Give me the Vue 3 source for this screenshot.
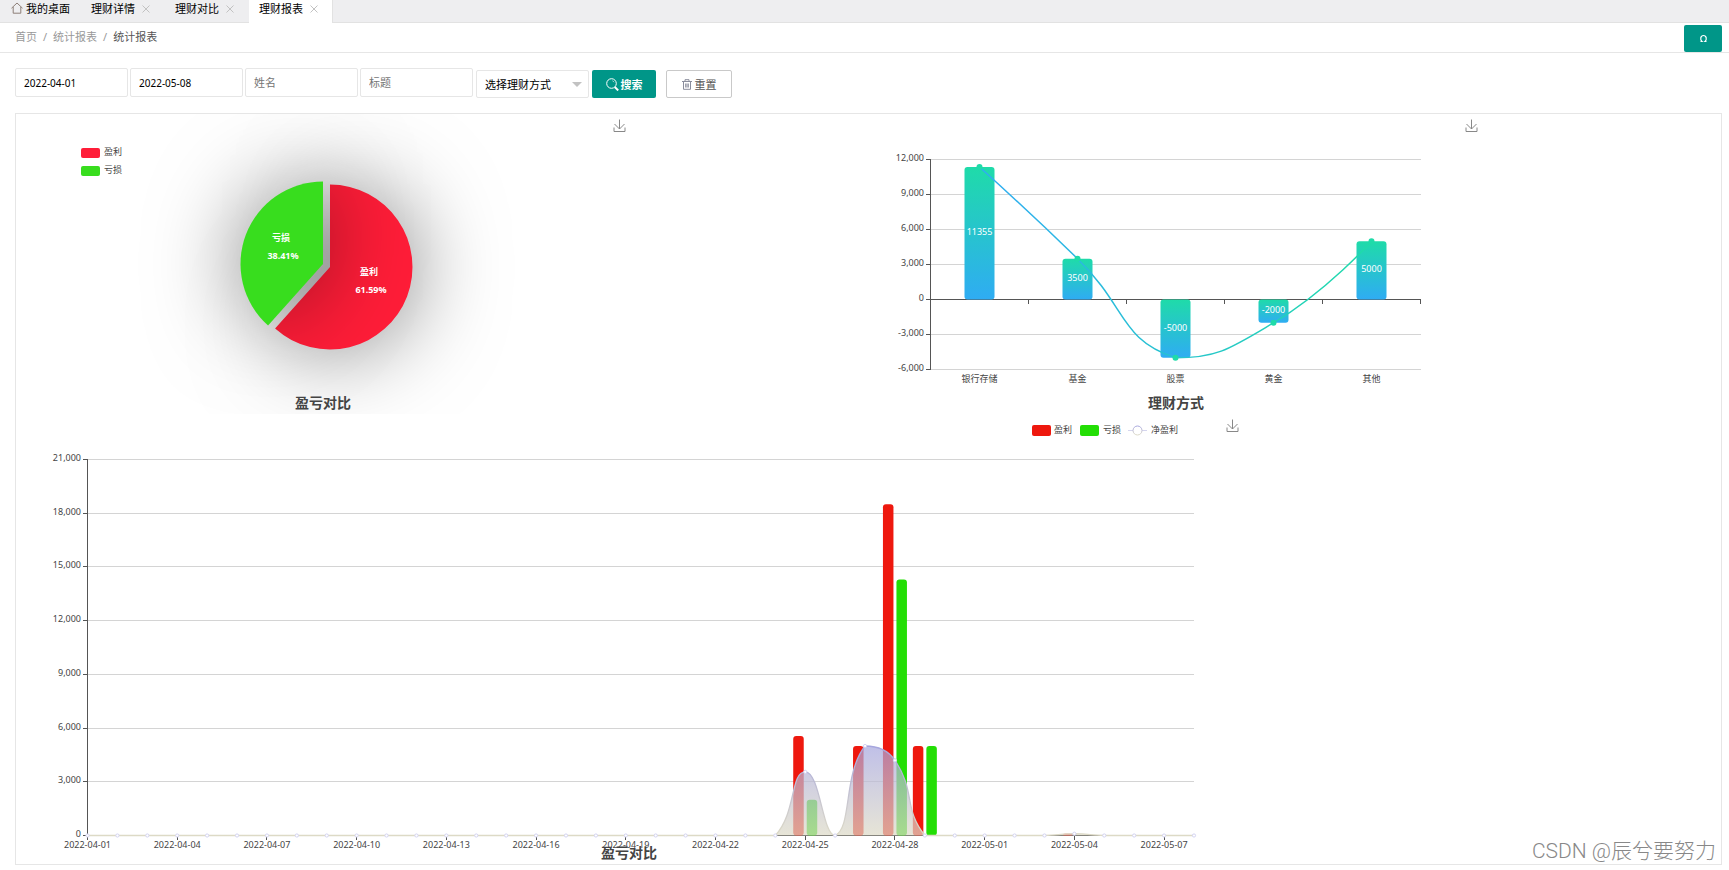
<script setup>
import { ref, computed } from 'vue'

const tabs = ref(['理财详情', '理财对比', '理财报表'])
const activeTab = ref('理财报表')

const form = ref({
  start: '2022-04-01',
  end: '2022-05-08',
  name: '',
  title: '',
  type: ''
})

const types = ['银行存储', '基金', '股票', '黄金', '其他']

const reset = () => {
  form.value = { start: '', end: '', name: '', title: '', type: '' }
}

const closeTab = tab => {
  tabs.value = tabs.value.filter(t => t !== tab)
}

const format = n => n.toLocaleString('en-US')

// pie
const slice = (cx, cy, r, from, to) => {
  const point = p => {
    const a = p * Math.PI * 2
    return `${cx + r * Math.sin(a)} ${cy - r * Math.cos(a)}`
  }
  const large = to - from > 0.5 ? 1 : 0
  return `M${cx} ${cy}L${point(from)}A${r} ${r} 0 ${large} 1 ${point(to)}Z`
}

const pie = [
  { name: '盈利', value: '61.59%', color: '#ff1d38', path: slice(314, 153, 82.5, 0, 0.6159), x: 354, y: 161 },
  { name: '亏损', value: '38.41%', color: '#38dd1e', path: slice(307, 150, 82.5, 0.6159, 1), x: 266, y: 127 }
]

// smooth line, control points never go past the neighbours
const clamp = (v, a, b) => Math.max(Math.min(v, Math.max(a, b)), Math.min(a, b))

const smooth = pts => {
  let d = `M${pts[0].x} ${pts[0].y}`
  let c0 = pts[0]
  for (let i = 1; i < pts.length; i++) {
    const prev = pts[i - 1]
    const p = pts[i]
    const next = pts[i + 1]
    let c1 = p
    let nextC0 = p
    if (next) {
      const d0 = Math.hypot(p.x - prev.x, p.y - prev.y)
      const d1 = Math.hypot(next.x - p.x, next.y - p.y)
      const vx = (next.x - prev.x) * 0.5
      const vy = (next.y - prev.y) * 0.5
      const k = d1 / (d0 + d1)
      nextC0 = {
        x: clamp(p.x + vx * k, p.x, next.x),
        y: clamp(p.y + vy * k, p.y, next.y)
      }
      c1 = {
        x: clamp(p.x - vx * (1 - k), prev.x, p.x),
        y: clamp(p.y - vy * (1 - k), prev.y, p.y)
      }
    }
    d += `C${c0.x} ${c0.y} ${c1.x} ${c1.y} ${p.x} ${p.y}`
    c0 = nextC0
  }
  return d
}

// 理财方式
const typeTicks = [12000, 9000, 6000, 3000, 0, -3000, -6000]
const typeValues = [11355, 3500, -5000, -2000, 5000]
const typeY = v => 185.5 - v * 35 / 3000
const typeBars = typeValues.map((value, i) => ({
  name: types[i],
  value,
  x: 110.5 + i * 98,
  y: typeY(value),
  top: Math.min(typeY(value), 185.5),
  height: Math.abs(value) * 35 / 3000
}))
const typeLine = smooth(typeBars)

// 盈亏对比
const dayTicks = [21000, 18000, 15000, 12000, 9000, 6000, 3000, 0]
const dayY = v => 421.5 - v * 376 / 21000
const records = {
  '2022-04-25': [5555, 2000],
  '2022-04-27': [5000, 0],
  '2022-04-28': [18500, 14300],
  '2022-04-29': [5000, 5000],
  '2022-05-04': [100, 0]
}
const days = computed(() => {
  const list = []
  for (let i = 0; i < 38; i++) {
    const date = new Date(Date.UTC(2022, 3, 1 + i)).toISOString().slice(0, 10)
    const [gain, loss] = records[date] || [0, 0]
    list.push({ date, gain, loss, x: 71.5 + i * 1106.5 / 37, y: dayY(gain - loss) })
  }
  return list
})
const dayLine = computed(() => smooth(days.value))
</script>

<template>
  <div class="page">
    <nav class="tabs">
      <a class="home" href="#">
        <svg width="12" height="12" viewBox="0 0 12 12" fill="none" stroke="#8d7f78">
          <path d="M.5 6.2 6 1l5.5 5.2M2.2 5v6.2h7.6V5" />
        </svg>
        我的桌面
      </a>
      <div v-for="tab in tabs" :key="tab" class="tab" :class="{ active: tab === activeTab }">
        <a href="#" @click.prevent="activeTab = tab">{{ tab }}</a>
        <button class="close" :aria-label="`关闭${tab}`" @click="closeTab(tab)">
          <svg width="8" height="8" viewBox="0 0 8 8" stroke="#c2c2c2"><path d="M.5.5l7 7M7.5.5l-7 7" /></svg>
        </button>
      </div>
    </nav>

    <header class="crumbs">
      <div class="path">
        <a href="#">首页</a><i>/</i><a href="#">统计报表</a><i>/</i><span>统计报表</span>
      </div>
      <button class="refresh" aria-label="刷新">
        <svg width="9" height="9" viewBox="0 0 9 9" fill="none" stroke="#fff" stroke-width="1.2">
          <path d="M1.5 7.5H3C.8 5.500 1.500 1.500 4.500 1.500S8.200 5.500 6 7.500h1.500" />
        </svg>
      </button>
    </header>

    <form class="search" @submit.prevent>
      <div class="fields">
        <input v-model="form.start" class="date" type="text" aria-label="开始日期">
        <input v-model="form.end" class="date" type="text" aria-label="结束日期">
        <input v-model="form.name" type="text" placeholder="姓名" aria-label="姓名">
        <input v-model="form.title" type="text" placeholder="标题" aria-label="标题">
      </div>
      <div class="select">
        <select v-model="form.type" aria-label="选择理财方式">
          <option value="">选择理财方式</option>
          <option v-for="t in types" :key="t" :value="t">{{ t }}</option>
        </select>
      </div>
      <button class="btn primary" type="submit">
        <svg width="13" height="13" viewBox="0 0 13 13" fill="none" stroke="#fff">
          <circle cx="5.5" cy="5.5" r="4.8" />
          <path d="M8.8 9l3.400 3.400" stroke-width="2" />
          <path d="M8 4.200A3 3 0 0 0 6.500 2.800" stroke-width=".7" />
        </svg>
        搜索
      </button>
      <button class="btn plain" type="button" @click="reset">
        <svg width="10" height="11" viewBox="0 0 10 11" fill="none" stroke="#8a8d9c">
          <path d="M0 2.500h10M3 2V.7h4V2M1.500 3v7.300h7V3M3.700 4.500v4M5 4.500v4M6.300 4.500v4" />
        </svg>
        重置
      </button>
    </form>

    <main class="board">
      <div class="row">
        <section>
          <svg class="half" viewBox="0 0 614 300">
            <defs>
              <filter id="shade" filterUnits="userSpaceOnUse" x="0" y="-100" width="614" height="500" color-interpolation-filters="sRGB">
                <feDropShadow dx="0" dy="0" stdDeviation="45" flood-color="#000" flood-opacity=".5" />
              </filter>
            </defs>
            <path v-for="p in pie" :key="p.name" :d="p.path" :fill="p.color" filter="url(#shade)" />
            <g v-for="p in pie" :key="p.value" class="pie-label">
              <text :x="p.x - 1" :y="p.y">{{ p.name }}</text>
              <text :x="p.x + 1" :y="p.y + 18">{{ p.value }}</text>
            </g>
            <g v-for="(p, i) in pie" :key="p.color">
              <rect x="65" :y="34 + i * 18" width="19" height="10" rx="2" :fill="p.color" />
              <text x="88" :y="41 + i * 18">{{ p.name }}</text>
            </g>
            <path class="download" d="M598 13.500v4h11v-4M603.500 5.500v9.500M598.500 10l5 5 5-5" />
            <text class="title" x="307" y="294">盈亏对比</text>
          </svg>
        </section>

        <section>
          <svg class="half" viewBox="0 0 614 300">
            <defs>
              <linearGradient id="bar" x1="0" y1="0" x2="0" y2="1">
                <stop offset="0" stop-color="#1fdba9" />
                <stop offset="1" stop-color="#2facf3" />
              </linearGradient>
              <linearGradient id="curve" x1="0" y1="0" x2="1" y2="0">
                <stop offset="0" stop-color="#2facf3" />
                <stop offset="1" stop-color="#1fdba9" />
              </linearGradient>
            </defs>
            <g v-for="t in typeTicks" :key="t">
              <path class="grid" :d="`M61.5 ${typeY(t)}H551.5`" />
              <path class="axis" :d="`M57 ${typeY(t)}h4.5`" />
              <text class="end" x="55" :y="typeY(t) + 1.5">{{ format(t) }}</text>
            </g>
            <path class="axis" d="M61.5 45V256M61.5 185.5H551.5" />
            <path v-for="i in 5" :key="i" class="axis" :d="`M${61.5 + i * 98} 185.5v4.5`" />
            <g v-for="b in typeBars" :key="b.name">
              <rect :x="b.x - 15" :y="b.top" width="30" :height="b.height" rx="3" fill="url(#bar)" />
              <text class="mid" :x="b.x" y="268">{{ b.name }}</text>
            </g>
            <path :d="typeLine" fill="none" stroke="url(#curve)" stroke-width="1.5" />
            <g v-for="b in typeBars" :key="b.value">
              <circle :cx="b.x" :cy="b.y" r="3" fill="#1fdba9" />
              <text class="mid light" :x="b.x" :y="b.top + b.height / 2 + 2">{{ b.value }}</text>
            </g>
            <path class="download" d="M597 13.500v4h11v-4M602.500 5.500v9.500M597.500 10l5 5 5-5" />
            <text class="title" x="307" y="294">理财方式</text>
          </svg>
        </section>
      </div>

      <section>
        <svg class="full" viewBox="0 0 1226 450">
          <defs>
            <linearGradient id="net" x1="0" y1="0" x2="0" y2="1">
              <stop offset="0" stop-color="#a6a6de" />
              <stop offset="1" stop-color="#dddac6" />
            </linearGradient>
          </defs>
          <g>
            <rect x="1016" y="11" width="19" height="11" rx="2" fill="#ee180e" />
            <text x="1038" y="19">盈利</text>
            <rect x="1064" y="11" width="19" height="11" rx="2" fill="#23de05" />
            <text x="1087" y="19">亏损</text>
            <path d="M1112 16.500h19" stroke="#d5d5ee" />
            <circle cx="1121.5" cy="16.5" r="4.5" fill="#fff" stroke="url(#net)" />
            <text x="1135" y="19">净盈利</text>
          </g>
          <path class="download" d="M1211 13.500v4h11v-4M1216.500 5.500v9.500M1211.500 10l5 5 5-5" />

          <g v-for="t in dayTicks" :key="t">
            <path class="grid" :d="`M71.5 ${dayY(t)}H1178`" />
            <path class="axis" :d="`M67 ${dayY(t)}h4.5`" />
            <text class="end" x="65" :y="dayY(t) + 1.5">{{ format(t) }}</text>
          </g>
          <path class="axis" d="M71.5 45V421.5H1178" />
          <g v-for="(d, i) in days" :key="d.date">
            <template v-if="i % 3 === 0">
              <path class="axis" :d="`M${d.x} 421.5v4.5`" />
              <text class="mid" :x="d.x" y="434">{{ d.date }}</text>
            </template>
            <rect v-if="d.gain" :x="d.x - 12" :y="dayY(d.gain)" width="10.5" :height="421.5 - dayY(d.gain)" rx="3" fill="#ee180e" />
            <rect v-if="d.loss" :x="d.x + 1.5" :y="dayY(d.loss)" width="10.5" :height="421.5 - dayY(d.loss)" rx="3" fill="#23de05" />
          </g>
          <path :d="dayLine + 'V421.5H71.5Z'" fill="url(#net)" opacity=".71" />
          <path :d="dayLine" fill="none" stroke="url(#net)" stroke-width="1.3" />
          <circle v-for="d in days" :key="d.date" :cx="d.x" :cy="d.y" r="1.6" fill="#fff" stroke="#cfcff0" stroke-width=".9" />
          <text class="title" x="613" y="444">盈亏对比</text>
        </svg>
      </section>

      <span class="mark">CSDN @辰兮要努力</span>
    </main>
  </div>
</template>

<style>
body {
  margin: 0;
  background: #fff;
}
</style>

<style scoped>
* {
  box-sizing: border-box;
}

.page,
input,
select,
button {
  font-family: "Noto Sans", "Noto Sans CJK SC", sans-serif;
  font-size: 11px;
}

a {
  color: inherit;
  text-decoration: none;
}

button {
  margin: 0;
  padding: 0;
  border: none;
  background: none;
  cursor: pointer;
}

.tabs {
  display: flex;
  height: 23px;
  line-height: 18px;
  background: #eeeef0;
  border-bottom: 1px solid #e2e2e2;
  color: #000;
}

.home {
  display: flex;
  align-items: flex-start;
  gap: 3px;
  width: 81px;
  padding-left: 11px;
}

.home svg {
  margin-top: 2px;
}

.tab {
  display: flex;
  align-items: flex-start;
  gap: 7px;
  width: 84px;
  height: 23px;
  padding-left: 10px;
}

.tab.active {
  background: #fff;
  border-right: 1px solid #e2e2e2;
}

.close {
  height: 18px;
}

.close svg {
  display: block;
}

.crumbs {
  display: flex;
  justify-content: space-between;
  height: 30px;
  padding-right: 7px;
  padding-left: 15px;
  border-bottom: 1px solid #e6e6e6;
  color: #999;
  line-height: 27px;
}

.crumbs i {
  margin: 0 6px;
  font-style: normal;
}

.crumbs span {
  color: #555;
}

.refresh {
  align-self: flex-end;
  width: 38px;
  height: 27px;
  border-radius: 2px;
  background: #009688;
}

.search {
  display: flex;
  flex-wrap: wrap;
  align-items: flex-end;
  gap: 3px;
  padding: 15px;
}

.fields {
  display: flex;
  gap: 2px;
  padding-bottom: 1px;
}

input,
select {
  width: 113px;
  height: 29px;
  padding: 0 8px;
  border: 1px solid #e6e6e6;
  border-radius: 2px;
  background: #fff;
  color: #000;
  outline: none;
}

input::placeholder {
  color: #757575;
}

.date {
  font-size: 10px;
}

.select {
  position: relative;
}

select {
  display: block;
  height: 28px;
  appearance: none;
}

.select::after {
  content: "";
  position: absolute;
  top: 12px;
  right: 7px;
  border: 5px solid transparent;
  border-top-color: #c2c2c2;
  border-bottom: none;
  pointer-events: none;
}

.btn {
  display: flex;
  align-items: center;
  justify-content: center;
  gap: 3px;
  height: 28px;
  border-radius: 2px;
}

.primary {
  gap: 2px;
  width: 64px;
  background: #009688;
  color: #fff;
  font-weight: 700;
}

.plain {
  width: 66px;
  margin-left: 7px;
  border: 1px solid #c9c9c9;
  color: #555;
}

.board {
  position: relative;
  margin: 0 7px 0 15px;
  border: 1px solid #e6e6e6;
}

.row {
  display: flex;
}

.row section {
  flex: 1;
}

svg.half,
svg.full {
  display: block;
  width: 100%;
  height: auto;
}

svg.half {
  max-width: 614px;
}

svg.full {
  max-width: 1226px;
}

text {
  font-size: 9px;
  fill: #444;
}

.mid,
.title,
.pie-label text {
  text-anchor: middle;
}

.end {
  text-anchor: end;
}

.light,
.pie-label text {
  fill: #fff;
}

.pie-label text {
  font-weight: 700;
}

.title {
  font-size: 14px;
  font-weight: 700;
}

.grid {
  stroke: #d4d4d4;
  shape-rendering: crispEdges;
}

.axis {
  fill: none;
  stroke: #555;
  shape-rendering: crispEdges;
}

.download {
  fill: none;
  stroke: #888;
}

.mark {
  position: absolute;
  right: 5px;
  bottom: 0;
  color: #888;
  font-family: Roboto, "Noto Sans CJK SC", sans-serif;
  font-size: 21px;
  font-weight: 300;
  line-height: 25px;
}
</style>
